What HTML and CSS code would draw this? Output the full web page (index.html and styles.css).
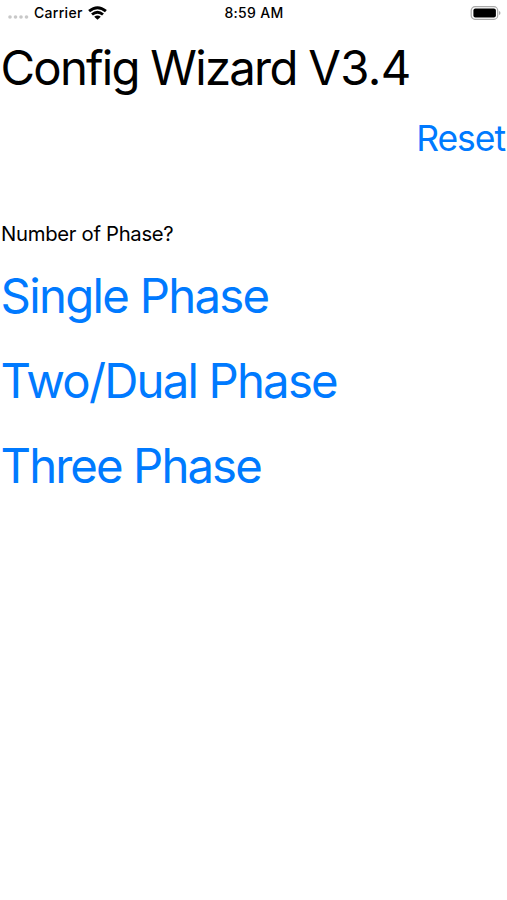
FILE: index.html
```html
<!DOCTYPE html>
<html lang="en"><head><meta charset="utf-8"><title>Config Wizard</title><link rel="stylesheet" href="styles.css"></head>
<body>
<header class="status">
<div class="carrier"><svg class="dots" width="22" height="6" viewBox="0 0 22 6" fill="#c8c8c8"><circle cx="3" cy="3" r="1.8"/><circle cx="8.5" cy="3" r="1.8"/><circle cx="14" cy="3" r="1.8"/><circle cx="19.5" cy="3" r="1.8"/></svg><span class="carrier-name">Carrier</span><svg class="wifi" width="19" height="14" viewBox="0 0 19 14" fill="none" stroke="#000" stroke-width="2.9"><path d="M1.1 5.2Q9.5-1.8 17.9 5.2M4 8.5Q9.5 4 15 8.5"/><path d="M9.5 13.8L6.2 10.8Q9.5 8 12.8 10.8Z" fill="#000" stroke="none"/></svg></div>
<span class="time">8:59 AM</span>
<svg class="battery" width="31" height="14" viewBox="0 0 31 14"><rect x="1.2" y=".7" width="26.5" height="12.6" rx="3.8" fill="none" stroke="#aaa" stroke-width="1.2"/><rect x="3.4" y="2.6" width="22.5" height="8.8" rx="2" fill="#000"/><path d="M29 5Q30.5 5.4 30.5 7Q30.5 8.6 29 9Z" fill="#aaa"/></svg>
</header>
<main>
<h1 class="title">Config Wizard <span class="version">V3.4</span></h1>
<button class="reset">Reset</button>
<p class="question">Number of Phase?</p>
<div class="choices"><button class="choice single">Single Phase</button><button class="choice two">Two/Dual Phase</button><button class="choice three">Three Phase</button></div>
</main>
</body></html>
```
FILE: styles.css
```css
* { box-sizing: border-box; }
body { margin: 0; min-height: 900px; background: #fff; color: #000; font-family: Inter, "Liberation Sans", sans-serif; overflow: hidden; }
button { padding: 0; border: 0; background: none; color: #007aff; font-family: inherit; white-space: nowrap; }
.status { height: 26px; display: grid; grid-template-columns: 1fr auto 1fr; align-items: center; padding: 0 6px 1px 7px; font-size: 14px; font-weight: 500; letter-spacing: .3px; }
.carrier { display: flex; align-items: center; }
.dots { margin: 8px 5px 0 0; }
.wifi { margin-left: 5px; }
.battery { justify-self: end; }
main { display: flex; flex-direction: column; padding: 0 1px; }
.title { margin: 12px 0 0 -.5px; height: 60px; line-height: 60px; font-size: 47.3px; font-weight: 400; letter-spacing: -1.75px; white-space: nowrap; }
.version { letter-spacing: -.6px; }
.reset { align-self: flex-end; margin: 19px 1px 0 0; height: 44px; line-height: 44px; font-size: 35.5px; letter-spacing: -1.05px; }
.question { margin: 60px 0 0; height: 26px; line-height: 26px; font-size: 20.3px; letter-spacing: -.3px; }
.choices { display: flex; flex-direction: column; align-items: flex-start; gap: 25.2px; margin: 19px 0 0 -.5px; }
.choice { height: 60px; line-height: 60px; font-size: 47.3px; letter-spacing: -1.8px; }
.single { letter-spacing: -1.7px; }
.three { letter-spacing: -1.9px; }
```
